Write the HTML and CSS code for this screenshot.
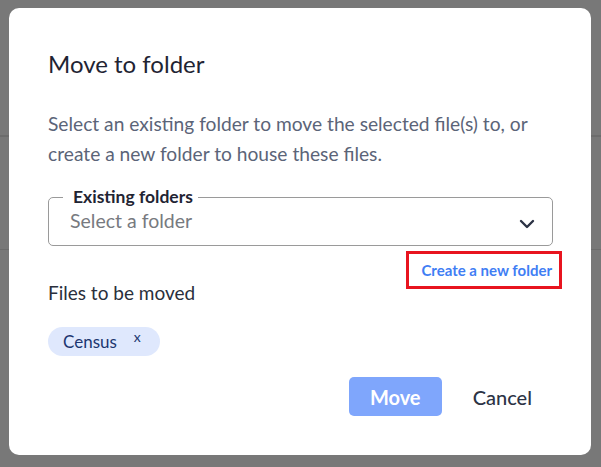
FILE: index.html
```html
<!DOCTYPE html>
<html>
<head>
<meta charset="utf-8">
<link rel="stylesheet" href="styles.css">
</head>
<body>
<div class="backdrop">
  <div class="dialog">
    <h1 class="title">Move to folder</h1>
    <p class="desc">Select an existing folder to move the selected file(s) to, or create a new folder to house these files.</p>
    <div class="select">
      <span class="legend">Existing folders</span>
      <span class="placeholder">Select a folder</span>
      <svg class="chevron" width="16" height="10" viewBox="0 0 16 10"><path d="M2 2 L8 8 L14 2" fill="none" stroke="#2c3345" stroke-width="2.4" stroke-linecap="round" stroke-linejoin="round"/></svg>
    </div>
    <div class="link-row">
      <a class="create-link">Create a new folder</a>
    </div>
    <div class="files-label">Files to be moved</div>
    <div class="chips">
      <span class="chip"><span class="chip-text">Census</span><span class="chip-x">x</span></span>
    </div>
    <div class="actions">
      <button class="btn-move">Move</button>
      <button class="btn-cancel">Cancel</button>
    </div>
  </div>
</div>
</body>
</html>
```

FILE: styles.css
```css
html, body {
  margin: 0;
  padding: 0;
}
body {
  width: 601px;
  height: 467px;
  overflow: hidden;
  font-family: Lato, "Noto Sans", sans-serif;
  background-color: #787878;
  background-image:
    linear-gradient(#6c6c6c, #6c6c6c),
    linear-gradient(#6c6c6c, #6c6c6c);
  background-size: 100% 2px, 100% 1px;
  background-position: 0 135px, 0 249px;
  background-repeat: no-repeat;
}
.backdrop {
  padding: 8px 10px 12px 9px;
  box-sizing: border-box;
  height: 467px;
  display: flex;
}
.dialog {
  flex: 1;
  background: #fff;
  border-radius: 10px;
  padding: 40px 38px 0 39px;
  display: flex;
  flex-direction: column;
}
.title {
  margin: 0;
  font-size: 24px;
  font-weight: 400;
  line-height: 32px;
  color: #1f2433;
}
.desc {
  margin: 29px 0 0 0;
  font-size: 19.2px;
  line-height: 30px;
  color: #5b6478;
}
.select {
  margin-top: 28px;
  padding: 0 17px 0 21px;
  border: 1px solid #9a9a9a;
  border-radius: 5px;
  height: 47px;
  display: flex;
  align-items: center;
  justify-content: space-between;
  position: relative;
}
.legend {
  position: absolute;
  left: 14px;
  top: -12px;
  padding: 0 5px 0 10px;
  background: #fff;
  font-size: 17.5px;
  font-weight: 700;
  color: #1f2433;
  line-height: 22px;
}
.placeholder {
  font-size: 19.5px;
  color: #777a80;
  line-height: 24px;
  margin-top: -2px;
}
.chevron {
  margin-top: 4px;
}
.link-row {
  display: flex;
  justify-content: flex-end;
  margin-top: 5px;
  margin-right: -9px;
}
.create-link {
  border: 3px solid #e8141f;
  padding: 7px 7px 7px 12px;
  font-size: 15px;
  font-weight: 700;
  color: #3f7ef4;
  line-height: 18px;
}
.files-label {
  margin-top: -7px;
  font-size: 19px;
  color: #2a2f3c;
  line-height: 22px;
}
.chips {
  margin-top: 23px;
  display: flex;
}
.chip {
  background: #dfe8fd;
  border-radius: 15px;
  height: 29px;
  padding: 0 19px 0 15px;
  display: flex;
  align-items: center;
  gap: 17px;
}
.chip-text {
  font-size: 17px;
  color: #1c3670;
}
.chip-x {
  font-size: 14px;
  color: #1c3670;
  margin-top: -10px;
}
.actions {
  margin-top: 21px;
  display: flex;
  justify-content: flex-end;
  align-items: center;
  gap: 31px;
  padding-right: 21px;
}
.btn-move {
  width: 93px;
  height: 39px;
  border: none;
  border-radius: 5px;
  background: #7fa6fc;
  color: #fff;
  font-family: Lato, sans-serif;
  font-size: 20px;
  font-weight: 700;
}
.btn-cancel {
  border: none;
  background: none;
  padding: 0;
  font-family: Lato, sans-serif;
  font-size: 20px;
  font-weight: 500;
  color: #2c3345;
}
```
